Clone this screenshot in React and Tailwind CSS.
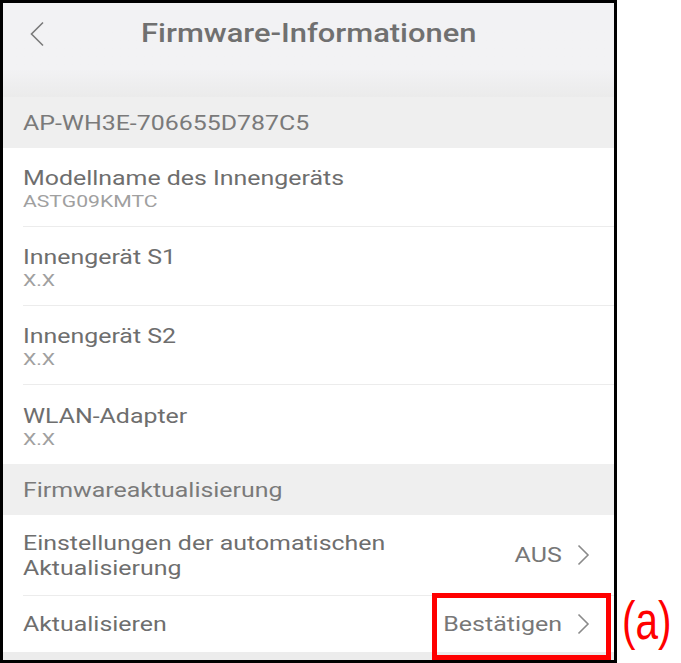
import React from "react";

const Chevron = ({ className = "" }) => (
  <svg width="13" height="22" viewBox="0 0 13 22" className={className} fill="none">
    <path d="M1.5 1.5 L11 11 L1.5 20.5" stroke="#8a8a8a" strokeWidth="1.6" />
  </svg>
);

const S = ({ children, right }) => (
  <span
    className={
      right
        ? "inline-block whitespace-nowrap origin-right scale-x-[1.25]"
        : "inline-block whitespace-nowrap origin-left scale-x-[1.245]"
    }
  >
    {children}
  </span>
);

const InfoRow = ({ title, value, last }) => (
  <div className="bg-white pl-[20px] h-[79px] flex flex-col">
    <div className="flex-1 flex flex-col justify-center pt-[4px]">
      <div className="text-[20px] leading-[24px] text-[#6e6e6e]">
        <S>{title}</S>
      </div>
      <div className="text-[17px] leading-[22px] text-[#a0a0a0]">
        <S>{value}</S>
      </div>
    </div>
    {!last && <div className="h-px bg-[#ececec]" />}
  </div>
);

const Section = ({ children }) => (
  <div className="h-[51px] bg-[#efefef] pl-[20px] flex items-center text-[20px] text-[#7a7a7a]">
    <S>{children}</S>
  </div>
);

export default function App() {
  return (
    <div
      className="w-[681px] h-[663px] bg-white relative flex overflow-hidden"
      style={{ fontFamily: "Roboto, 'Noto Sans', sans-serif" }}
    >
      <div className="w-[617px] shrink-0 h-[663px] border-[3px] border-black flex flex-col overflow-hidden bg-[#eeeeee]">
        <div className="h-[94px] bg-gradient-to-b from-[#f2f2f4] from-70% to-[#ebebeb] relative flex flex-col">
          <div className="h-[62px] flex items-center">
            <div className="w-[95px] pl-[25px] flex items-center">
              <svg width="18" height="26" viewBox="0 0 18 26" fill="none">
                <path d="M15 1.5 L3.5 13 L15 24.5" stroke="#7a7a7a" strokeWidth="1.6" />
              </svg>
            </div>
            <div className="flex-1 text-center pr-[95px] text-[25px] font-medium text-[#707070]">
              <span className="inline-block origin-center scale-x-[1.235]">
                Firmware-Informationen
              </span>
            </div>
          </div>
        </div>
        <Section>AP-WH3E-706655D787C5</Section>
        <InfoRow title="Modellname des Innengeräts" value="ASTG09KMTC" />
        <InfoRow title="Innengerät S1" value="X.X" />
        <InfoRow title="Innengerät S2" value="X.X" />
        <InfoRow title="WLAN-Adapter" value="X.X" last />
        <Section>Firmwareaktualisierung</Section>
        <div className="bg-white pl-[20px] h-[81px] flex flex-col">
          <div className="flex-1 flex items-center pr-[24px]">
            <div className="flex-1 flex flex-col text-[20px] leading-[25px] text-[#6e6e6e] pt-[2px]">
              <div>
                <S>Einstellungen der automatischen</S>
              </div>
              <div>
                <S>Aktualisierung</S>
              </div>
            </div>
            <div className="flex items-center gap-[15px] text-[20px] text-[#777]">
              <S right>AUS</S>
              <Chevron />
            </div>
          </div>
          <div className="h-px bg-[#ececec]" />
        </div>
        <div className="bg-white pl-[20px] h-[56px] flex items-center pr-[24px]">
          <div className="flex-1 text-[20px] text-[#6e6e6e]">
            <S>Aktualisieren</S>
          </div>
          <div className="flex items-center gap-[15px] text-[20px] text-[#777]">
            <S right>Bestätigen</S>
            <Chevron />
          </div>
        </div>
        <div className="flex-1 bg-[#ececec]" />
      </div>
      <div className="absolute left-[432px] top-[593px] w-[179px] h-[67px] border-[5px] border-[#ff0000]" />
      <div
        className="shrink-0 pl-[5px] pt-[590px] text-[#ff0000] text-[54px] leading-[60px]"
        style={{ fontFamily: "'Liberation Sans', Arial, sans-serif" }}
      >
        <span className="inline-block scale-x-75 origin-left">(a)</span>
      </div>
    </div>
  );
}
